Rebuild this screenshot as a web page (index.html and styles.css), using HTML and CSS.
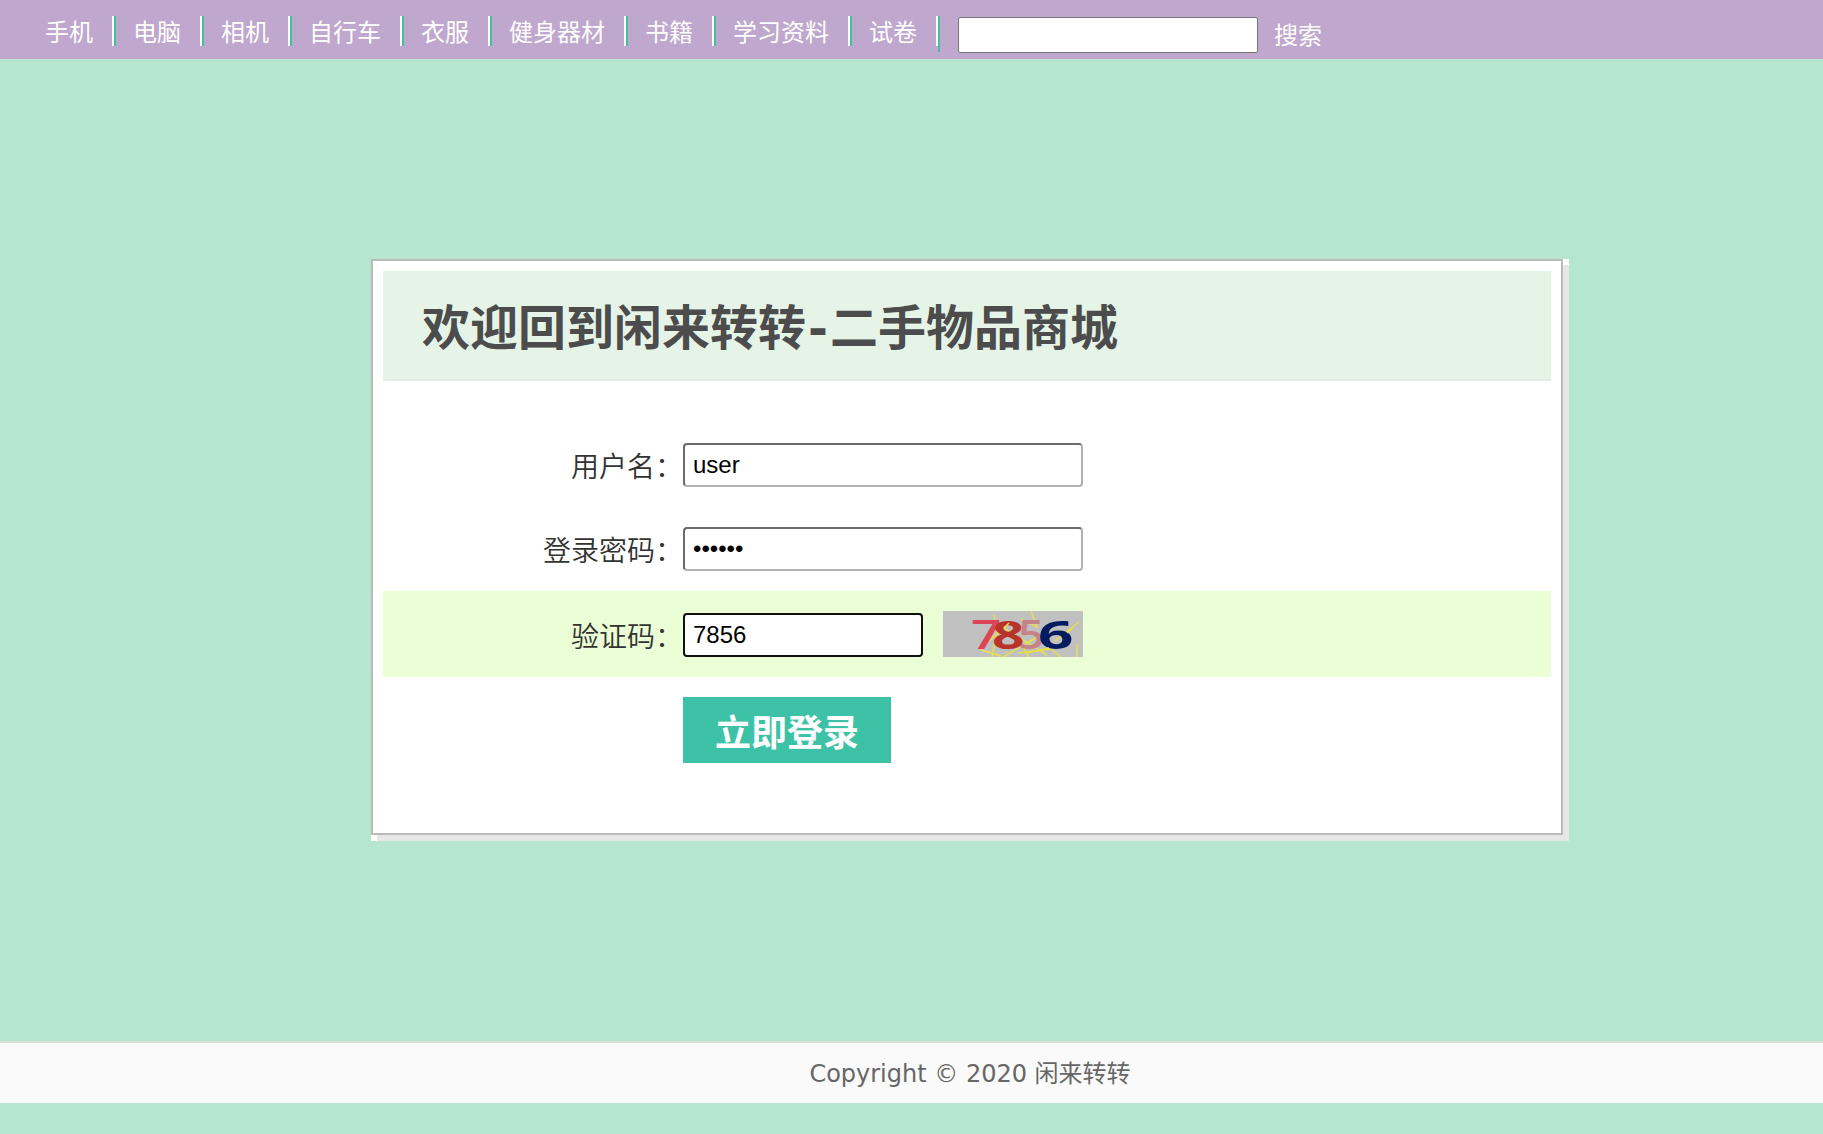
FILE: index.html
```html
<!DOCTYPE html>
<html lang="zh-CN">
<head>
    <meta charset="UTF-8">
    <title>闲来转转-登录</title>
    <link rel="stylesheet" href="styles.css">
</head>
<body>

<div class="header">
    <ul class="nav">
        <li><a>手机</a></li>
        <li><a>电脑</a></li>
        <li><a>相机</a></li>
        <li><a>自行车</a></li>
        <li><a>衣服</a></li>
        <li><a>健身器材</a></li>
        <li><a>书籍</a></li>
        <li><a>学习资料</a></li>
        <li><a>试卷</a></li>
    </ul>
    <form class="search">
        <input type="text" class="search-input" name="keyword">
        <a class="search-btn">搜索</a>
    </form>
</div>

<div class="login-wrap">
    <div class="login">
        <h1>欢迎回到闲来转转<span class="dash">-</span>二手物品商城</h1>
        <form class="login-form">
            <div class="row">
                <label for="username">用户名：</label>
                <input type="text" id="username" value="user">
            </div>
            <div class="row">
                <label for="password">登录密码：</label>
                <input type="password" id="password" value="123456">
            </div>
            <div class="row row-active">
                <label for="code">验证码：</label>
                <input type="text" id="code" class="code" value="7856">
                <svg class="captcha" width="140" height="46" viewBox="0 0 140 46">
                    <rect width="140" height="46" fill="#c0c0c0"/>
                    <g class="noise">
                        <path d="M51 4L54 20L49 46M38 39L58 45M66 12L46 30M88 0L94 16L78 8M136 11L112 30M98 24L60 46M75 42L108 38L118 46M80 36L86 46M134 33V46M56 14L104 44"/>
                    </g>
                    <text class="digit" transform="translate(28 38) scale(1.33 1)" fill="#dc4458">7</text>
                    <text class="digit" transform="translate(75 38) scale(1.15 1)" fill="#c58288">5</text>
                    <text class="digit bold" transform="translate(49 38) scale(1.42 1)" fill="#b8342a">8</text>
                    <text class="digit bold" transform="translate(95 38) scale(1.55 1)" fill="#001c60">6</text>
                    <path class="noise" d="M84 42L106 37M66 12L62 16M130 17L124 22"/>
                </svg>
            </div>
            <div class="row">
                <label></label>
                <button type="button" class="submit">立即登录</button>
            </div>
        </form>
    </div>
</div>

<div class="footer">Copyright © 2020 闲来转转</div>

</body>
</html>
```

FILE: styles.css
```css
* {
    box-sizing: border-box;
}
body {
    margin: 0;
    background: #b6e6cf;
    font-family: "DejaVu Sans", "Noto Sans CJK SC", sans-serif;
    font-size: 24px;
}

/* top bar */
.header {
    display: flex;
    align-items: flex-start;
    height: 59px;
    padding: 16px 0 0 26px;
    background: #bfa7ce;
    color: #fff;
    font-family: "Noto Sans CJK SC", sans-serif;
}
.nav {
    display: flex;
    margin: 0;
    padding: 0;
    list-style: none;
}
.nav li {
    height: 30px;
    padding: 0 19px 0 17px;
    border-left: 2px solid #45bfa3;
    border-right: 2px solid #fff;
    line-height: 29px;
}
.nav li:first-child {
    border-left-color: transparent;
}
.search {
    display: flex;
    height: 36px;
    padding-left: 18px;
    border-left: 2px solid #45bfa3;
    line-height: 35px;
}
.search-input {
    width: 300px;
    height: 36px;
    margin: 1px 16px 0 0;
    border: 1px solid #767676;
    border-radius: 2px;
    font-size: 24px;
}

/* login box */
.login-wrap {
    width: 1198px;
    height: 582px;
    margin: 200px 0 200px 371px;
    padding: 0 6px 6px 0;
    background: #fff;
}
.login {
    height: 576px;
    padding: 10px;
    border: 2px solid #bbb;
    background: #fff;
    box-shadow: 6px 6px 0 #e7e7e7;
}
.login h1 {
    height: 110px;
    margin: 0 0 42px;
    padding-left: 39px;
    border-bottom: 2px solid #e2ebe4;
    background: #e5f4e7;
    color: #4c4c4c;
    font-family: "Noto Sans CJK SC", sans-serif;
    font-size: 48px;
    line-height: 106px;
}
.dash {
    display: inline-block;
    width: 24px;
    font-family: "DejaVu Sans", sans-serif;
    line-height: 1;
    text-align: center;
}
.row {
    display: flex;
    align-items: flex-end;
    padding: 20px 0;
}
.row-active {
    background: #eaffd5;
}
.row label {
    width: 300px;
    height: 44px;
    color: #333;
    font-family: "Noto Sans CJK SC", sans-serif;
    font-size: 28px;
    font-weight: 350;
    line-height: 44px;
    text-align: right;
}
.row input {
    width: 400px;
    height: 44px;
    padding: 0 8px;
    border: 2px solid;
    border-color: #6b6b6b #b2b2b2 #b2b2b2 #6b6b6b;
    border-radius: 4px;
    background: #fff;
    color: #000;
    font-family: "Liberation Sans", Arial, sans-serif;
    font-size: 24px;
}
.row .code {
    width: 240px;
    border-color: #101010;
}
.captcha {
    margin-left: 20px;
}
.noise {
    fill: none;
    stroke: #e6e04a;
    stroke-width: 1.5;
}
.digit {
    font-family: "Open Sans", sans-serif;
    font-size: 40px;
    font-weight: 600;
}
.digit.bold {
    font-weight: 700;
}
.submit {
    width: 208px;
    height: 66px;
    padding: 0;
    border: 0;
    background: #3dc2a7;
    color: #fff;
    font-family: "Noto Sans CJK SC", sans-serif;
    font-size: 36px;
    font-weight: bold;
}

.footer {
    height: 62px;
    padding-left: 117px;
    border-top: 2px solid #d7e2dc;
    background: #fafafa;
    color: #666;
    line-height: 62px;
    text-align: center;
}
```
